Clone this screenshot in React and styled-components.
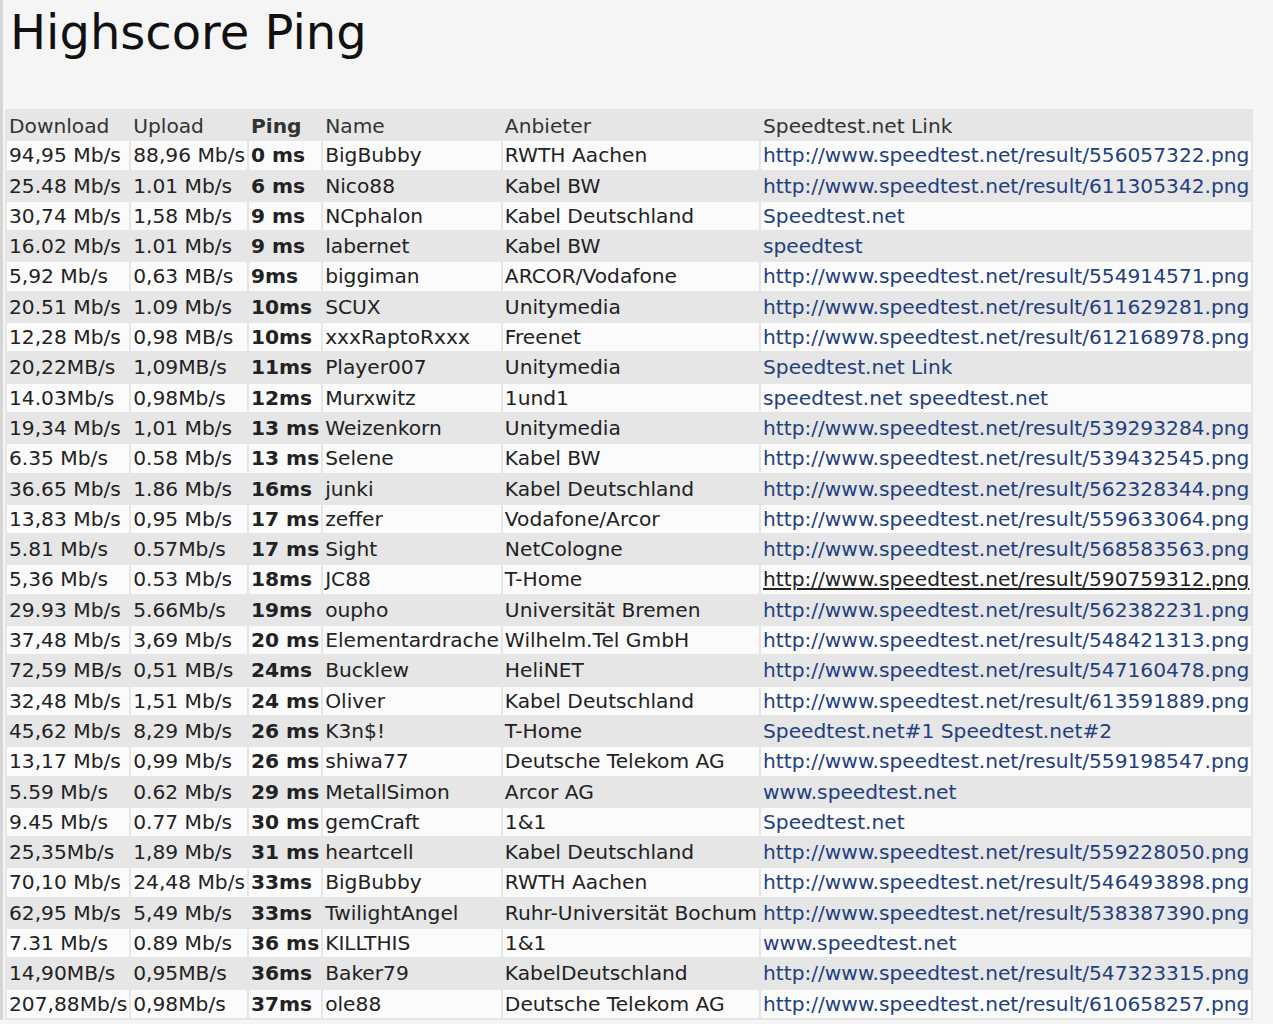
import React from "react";
import styled, { createGlobalStyle } from "styled-components";

const Global = createGlobalStyle`
  html, body { margin: 0; background: #f5f5f5; }
  body { padding: 0 0 0 2px; border-left: 3px solid #d6d6d6; font-family: "DejaVu Sans", Verdana, sans-serif; color: #222; }
`;

const Page = styled.div` padding: 0; `;
const Title = styled.h1`
  font-weight: normal; font-size: 48px; margin: 0; padding: 4px 0 0 5px; line-height: 56px; color: #111;
`;
const Table = styled.table`
  margin-top: 49px; background: #e6e6e6; border-spacing: 2px; font-size: 20.2px; white-space: nowrap;
`;
const Th = styled.th`
  text-align: left; font-weight: ${p => (p.$bold ? "bold" : "normal")}; padding: 3px 2px 1px; line-height: 24.3px; color: #333;
`;
const Tr = styled.tr` background: ${p => (p.$odd ? "#fbfbfb" : "transparent")}; `;
const Td = styled.td`
  padding: 2px 2px; line-height: 24.3px; font-weight: ${p => (p.$bold ? "bold" : "normal")};
`;
const Link = styled.a`
  color: #1f3f80; text-decoration: ${p => (p.$u ? "underline" : "none")};
  ${p => p.$u && "color:#222;"}
`;

const rows = [
  ["94,95 Mb/s","88,96 Mb/s","0 ms","BigBubby","RWTH Aachen","http://www.speedtest.net/result/556057322.png"],
  ["25.48 Mb/s","1.01 Mb/s","6 ms","Nico88","Kabel BW","http://www.speedtest.net/result/611305342.png"],
  ["30,74 Mb/s","1,58 Mb/s","9 ms","NCphalon","Kabel Deutschland","Speedtest.net"],
  ["16.02 Mb/s","1.01 Mb/s","9 ms","labernet","Kabel BW","speedtest"],
  ["5,92 Mb/s","0,63 MB/s","9ms","biggiman","ARCOR/Vodafone","http://www.speedtest.net/result/554914571.png"],
  ["20.51 Mb/s","1.09 Mb/s","10ms","SCUX","Unitymedia","http://www.speedtest.net/result/611629281.png"],
  ["12,28 Mb/s","0,98 MB/s","10ms","xxxRaptoRxxx","Freenet","http://www.speedtest.net/result/612168978.png"],
  ["20,22MB/s","1,09MB/s","11ms","Player007","Unitymedia","Speedtest.net Link"],
  ["14.03Mb/s","0,98Mb/s","12ms","Murxwitz","1und1","speedtest.net speedtest.net"],
  ["19,34 Mb/s","1,01 Mb/s","13 ms","Weizenkorn","Unitymedia","http://www.speedtest.net/result/539293284.png"],
  ["6.35 Mb/s","0.58 Mb/s","13 ms","Selene","Kabel BW","http://www.speedtest.net/result/539432545.png"],
  ["36.65 Mb/s","1.86 Mb/s","16ms","junki","Kabel Deutschland","http://www.speedtest.net/result/562328344.png"],
  ["13,83 Mb/s","0,95 Mb/s","17 ms","zeffer","Vodafone/Arcor","http://www.speedtest.net/result/559633064.png"],
  ["5.81 Mb/s","0.57Mb/s","17 ms","Sight","NetCologne","http://www.speedtest.net/result/568583563.png"],
  ["5,36 Mb/s","0.53 Mb/s","18ms","JC88","T-Home","http://www.speedtest.net/result/590759312.png",true],
  ["29.93 Mb/s","5.66Mb/s","19ms","oupho","Universität Bremen","http://www.speedtest.net/result/562382231.png"],
  ["37,48 Mb/s","3,69 Mb/s","20 ms","Elementardrache","Wilhelm.Tel GmbH","http://www.speedtest.net/result/548421313.png"],
  ["72,59 MB/s","0,51 MB/s","24ms","Bucklew","HeliNET","http://www.speedtest.net/result/547160478.png"],
  ["32,48 Mb/s","1,51 Mb/s","24 ms","Oliver","Kabel Deutschland","http://www.speedtest.net/result/613591889.png"],
  ["45,62 Mb/s","8,29 Mb/s","26 ms","K3n$!","T-Home","Speedtest.net#1 Speedtest.net#2"],
  ["13,17 Mb/s","0,99 Mb/s","26 ms","shiwa77","Deutsche Telekom AG","http://www.speedtest.net/result/559198547.png"],
  ["5.59 Mb/s","0.62 Mb/s","29 ms","MetallSimon","Arcor AG","www.speedtest.net"],
  ["9.45 Mb/s","0.77 Mb/s","30 ms","gemCraft","1&1","Speedtest.net"],
  ["25,35Mb/s","1,89 Mb/s","31 ms","heartcell","Kabel Deutschland","http://www.speedtest.net/result/559228050.png"],
  ["70,10 Mb/s","24,48 Mb/s","33ms","BigBubby","RWTH Aachen","http://www.speedtest.net/result/546493898.png"],
  ["62,95 Mb/s","5,49 Mb/s","33ms","TwilightAngel","Ruhr-Universität Bochum","http://www.speedtest.net/result/538387390.png"],
  ["7.31 Mb/s","0.89 Mb/s","36 ms","KILLTHIS","1&1","www.speedtest.net"],
  ["14,90MB/s","0,95MB/s","36ms","Baker79","KabelDeutschland","http://www.speedtest.net/result/547323315.png"],
  ["207,88Mb/s","0,98Mb/s","37ms","ole88","Deutsche Telekom AG","http://www.speedtest.net/result/610658257.png"],
];

export default function App() {
  return (
    <Page>
      <Global />
      <Title>Highscore Ping</Title>
      <Table>
        <thead>
          <tr>
            <Th>Download</Th><Th>Upload</Th><Th $bold>Ping</Th><Th>Name</Th><Th>Anbieter</Th><Th>Speedtest.net Link</Th>
          </tr>
        </thead>
        <tbody>
          {rows.map((r, i) => (
            <Tr key={i} $odd={i % 2 === 0}>
              <Td>{r[0]}</Td><Td>{r[1]}</Td><Td $bold>{r[2]}</Td><Td>{r[3]}</Td><Td>{r[4]}</Td>
              <Td><Link href="#" $u={r[6]}>{r[5]}</Link></Td>
            </Tr>
          ))}
        </tbody>
      </Table>
    </Page>
  );
}
